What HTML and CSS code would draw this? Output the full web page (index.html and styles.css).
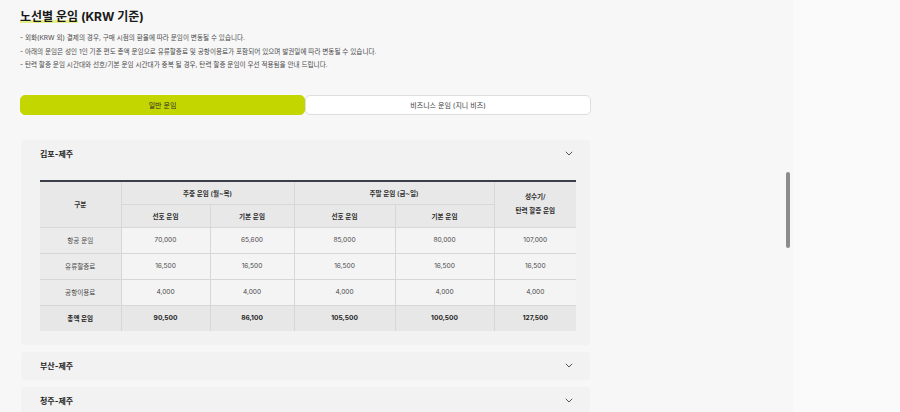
FILE: index.html
```html
<!DOCTYPE html>
<html lang="ko">
<head>
<meta charset="utf-8">
<title>노선별 운임</title>
<link rel="stylesheet" href="styles.css">
</head>
<body>
<div class="page">
  <div class="main">
    <div class="content">
      <h1 class="title"><span class="hl">노선별 운임</span> (KRW 기준)</h1>
      <ul class="notes">
        <li>- 외화(KRW 외) 결제의 경우, 구매 시점의 환율에 따라 운임이 변동될 수 있습니다.</li>
        <li>- 아래의 운임은 성인 1인 기준 편도 총액 운임으로 유류할증료 및 공항이용료가 포함되어 있으며 발권일에 따라 변동될 수 있습니다.</li>
        <li>- 탄력 할증 운임 시간대와 선호/기본 운임 시간대가 중복 될 경우, 탄력 할증 운임이 우선 적용됨을 안내 드립니다.</li>
      </ul>
      <div class="tabs">
        <button class="tab active">일반 운임</button>
        <button class="tab">비즈니스 운임 (지니 비즈)</button>
      </div>

      <section class="card">
        <div class="card-head">
          <span class="route">김포-제주</span>
          <svg class="chev" width="8" height="5" viewBox="0 0 8 5"><polyline points="0.8,0.8 4,4 7.2,0.8" fill="none" stroke="#555" stroke-width="1"/></svg>
        </div>
        <table class="fare">
          <colgroup>
            <col style="width:81px"><col style="width:89px"><col style="width:84px"><col style="width:101px"><col style="width:99px"><col style="width:82px">
          </colgroup>
          <thead>
            <tr class="h1">
              <th rowspan="2">구분</th>
              <th colspan="2">주중 운임 (월~목)</th>
              <th colspan="2">주말 운임 (금~일)</th>
              <th rowspan="2" class="two">성수기/<br>탄력 할증 운임</th>
            </tr>
            <tr class="h2">
              <th>선호 운임</th>
              <th>기본 운임</th>
              <th>선호 운임</th>
              <th>기본 운임</th>
            </tr>
          </thead>
          <tbody>
            <tr><th>항공 운임</th><td>70,000</td><td>65,600</td><td>85,000</td><td>80,000</td><td>107,000</td></tr>
            <tr><th>유류할증료</th><td>16,500</td><td>16,500</td><td>16,500</td><td>16,500</td><td>16,500</td></tr>
            <tr><th>공항이용료</th><td>4,000</td><td>4,000</td><td>4,000</td><td>4,000</td><td>4,000</td></tr>
            <tr class="total"><th>총액 운임</th><td>90,500</td><td>86,100</td><td>105,500</td><td>100,500</td><td>127,500</td></tr>
          </tbody>
        </table>
      </section>

      <section class="card closed">
        <div class="card-head">
          <span class="route">부산-제주</span>
          <svg class="chev" width="8" height="5" viewBox="0 0 8 5"><polyline points="0.8,0.8 4,4 7.2,0.8" fill="none" stroke="#555" stroke-width="1"/></svg>
        </div>
      </section>

      <section class="card closed">
        <div class="card-head">
          <span class="route">청주-제주</span>
          <svg class="chev" width="8" height="5" viewBox="0 0 8 5"><polyline points="0.8,0.8 4,4 7.2,0.8" fill="none" stroke="#555" stroke-width="1"/></svg>
        </div>
      </section>
    </div>
    <div class="track"><div class="thumb"></div></div>
  </div>
  <div class="side"></div>
</div>
</body>
</html>
```

FILE: styles.css
```css
html, body {
  margin: 0;
  padding: 0;
  height: 100%;
  overflow: hidden;
}
body {
  background: #f7f7f7;
  font-family: Inter, "Noto Sans CJK KR", sans-serif;
  color: #333;
}
.page {
  display: flex;
  height: 412px;
}
.main {
  width: 793px;
  display: flex;
  background: #f7f7f7;
}
.side {
  flex: 1;
  background: #fafafa;
}
.content {
  width: 571px;
  padding: 9px 0 0 20px;
}
.track {
  margin-left: auto;
  margin-right: 3px;
  width: 4px;
}
.thumb {
  margin-top: 172px;
  height: 76px;
  width: 4px;
  border-radius: 2px;
  background: #8c8c8c;
}
.title {
  margin: 0;
  font-size: 12px;
  line-height: 16px;
  font-weight: 700;
  color: #1a1a1a;
}
.hl {
  background: linear-gradient(transparent 72%, #e5ee8c 72%, #e5ee8c 92%, transparent 92%);
}
.notes {
  list-style: none;
  margin: 7px 0 0;
  padding: 0;
  font-size: 6.6px;
  line-height: 13.5px;
  color: #4a4a4a;
}
.tabs {
  margin-top: 22px;
  display: grid;
  grid-template-columns: 285px 286px;
  height: 20px;
}
.tab {
  font-family: inherit;
  font-size: 7px;
  color: #3a3a3a;
  background: #fff;
  border: 1px solid #dedede;
  border-radius: 5px;
  padding: 0;
  margin: 0;
}
.tab.active {
  background: #c3d600;
  border-color: #c3d600;
  color: #2a2a2a;
  position: relative;
  z-index: 1;
}
.card {
  margin-top: 25px;
  margin-left: 1px;
  width: 569px;
  background: #f2f2f2;
  border-radius: 4px;
  padding-bottom: 14px;
}
.card.closed {
  margin-top: 7px;
  padding-bottom: 0;
}
.card-head {
  height: 28px;
  display: flex;
  align-items: center;
  justify-content: space-between;
  padding: 0 17px 0 19px;
}
.route {
  font-size: 8px;
  font-weight: 700;
  color: #222;
}
.chev {
  display: block;
}
.fare {
  margin: 12px 0 0 19px;
  width: 536px;
  border-collapse: collapse;
  table-layout: fixed;
  font-size: 6.6px;
  text-align: center;
  border-top: 2px solid #3a3e48;
}
.fare th, .fare td {
  border: 1px solid #d7d7d7;
  padding: 0;
}
.fare tr > :first-child { border-left: none; }
.fare tr > :last-child { border-right: none; }
.fare thead th {
  background: #e8e8e8;
  font-weight: 600;
  color: #2e2e2e;
}
.fare thead .h2 th:last-child { border-right: 1px solid #d7d7d7; }
.fare .h1 th { height: 22px; }
.fare .h2 th { height: 22px; }
.fare .two { line-height: 14px; }
.fare tbody th {
  background: #ebebeb;
  font-weight: 400;
  color: #4a4a4a;
  height: 25px;
}
.fare tbody td {
  background: #f4f4f4;
  color: #4a4a4a;
}
.fare tbody tr.total th,
.fare tbody tr.total td {
  background: #e7e7e7;
  font-weight: 700;
  color: #262626;
}
.fare tbody tr:last-child > * { border-bottom: none; }
```
